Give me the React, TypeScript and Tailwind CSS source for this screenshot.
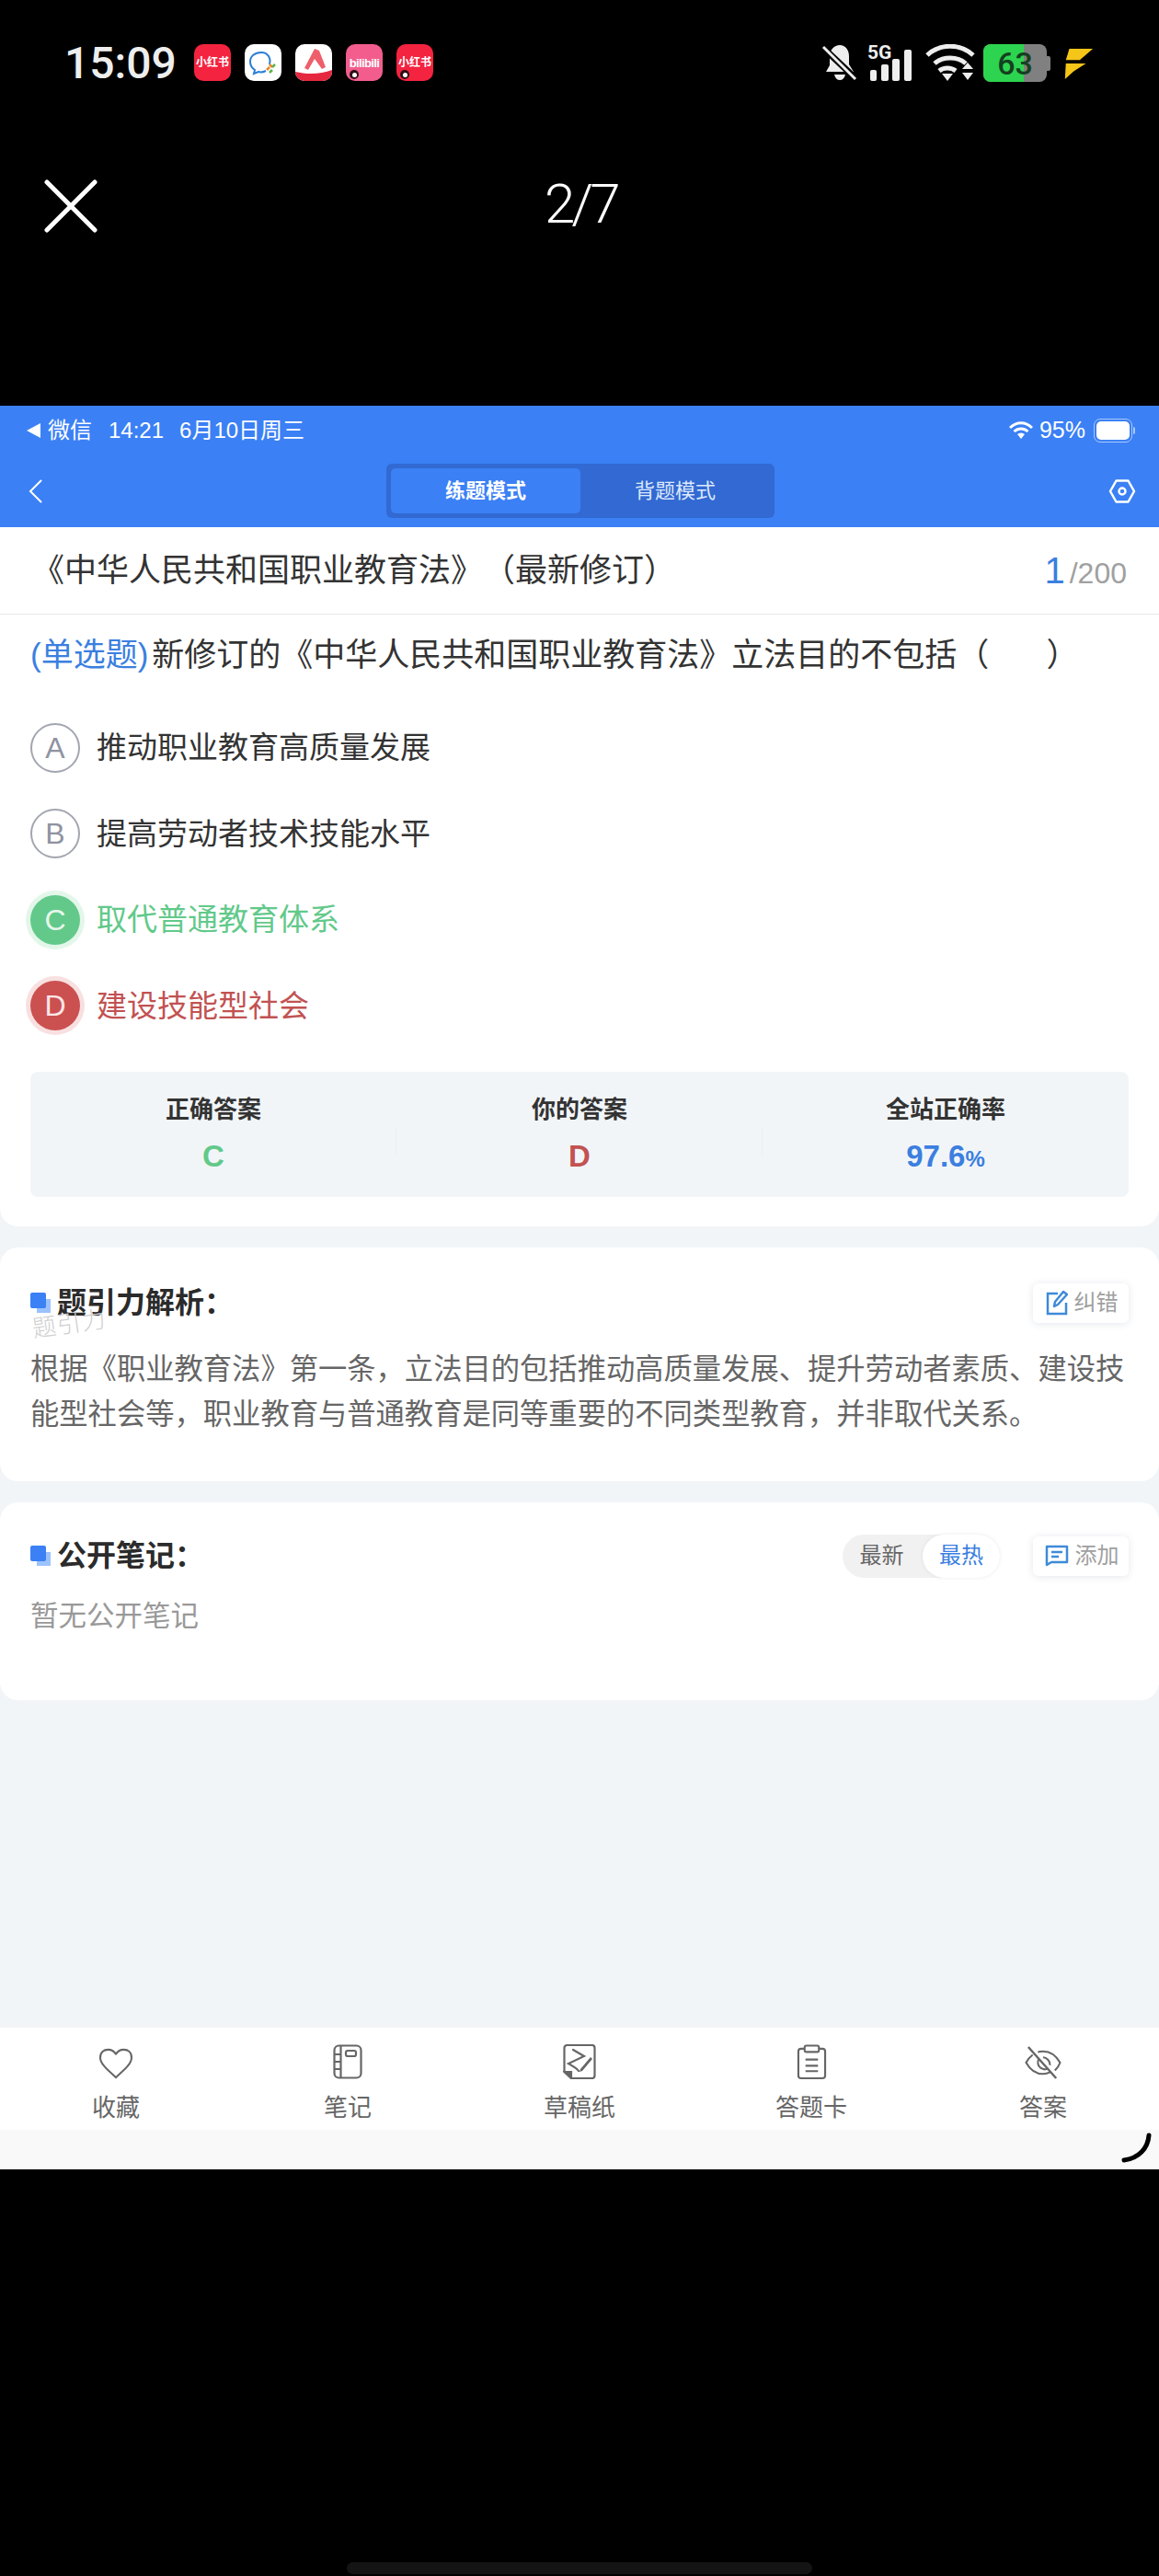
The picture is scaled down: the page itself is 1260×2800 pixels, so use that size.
import type { ReactNode } from 'react';

const BASE_FONT = "font-['Liberation_Sans','Noto_Sans_CJK_SC',sans-serif]";

/** Small app badge in the phone's notification row. */
function AppBadge({ className, children }: { className: string; children: ReactNode }) {
  return (
    <div className={`relative flex h-[40px] w-[40px] items-center justify-center overflow-hidden rounded-[10px] ${className}`}>
      {children}
    </div>
  );
}

function RecordDot() {
  return (
    <span className="absolute bottom-[2px] left-[4px] flex h-[10px] w-[10px] items-center justify-center rounded-full bg-[#2b1018]">
      <span className="h-[5px] w-[5px] rounded-full bg-white" />
    </span>
  );
}

function PhoneStatusBar() {
  return (
    <div className="flex h-[88px] items-start pl-[70px] pt-[48px]">
      <span className="mt-[-4px] w-[141px] font-['Roboto',sans-serif] text-[48px] leading-[50px] font-medium text-[#eeeeee]">15:09</span>
      <div className="flex gap-[15px]">
        <AppBadge className="bg-[#f4233f]">
          <span className="text-[12px] font-bold whitespace-nowrap text-white">小红书</span>
        </AppBadge>
        <AppBadge className="bg-white">
          <svg viewBox="0 0 40 40" className="h-[40px] w-[40px]" fill="none">
            <path d="M27 22c2-7-2-13-9-13S6 13 6 19c0 4 2 7 5 9l-1 4 5-2c3 1 6 0 8-1" stroke="#2b7fd6" strokeWidth="2" />
            <path d="M27 22l3 3M24 28l3-3" stroke="#e8862a" strokeWidth="2.5" />
            <path d="M30 25l3-3M27 31l3-3" stroke="#5ab34a" strokeWidth="2.5" />
          </svg>
        </AppBadge>
        <AppBadge className="bg-white">
          <svg viewBox="0 0 40 40" className="h-[40px] w-[40px]">
            <path d="M10 26L21 5l5 2 7 18-4 2-8-11-7 12z" fill="#ee5f6b" />
            <path d="M0 30c12 3 28 3 40-2v12H0z" fill="#e5283f" />
          </svg>
        </AppBadge>
        <AppBadge className="bg-[#f25d8e]">
          <span className="text-[13px] leading-none font-bold tracking-tighter text-white">bilibili</span>
          <RecordDot />
        </AppBadge>
        <AppBadge className="bg-[#f4233f]">
          <span className="text-[12px] font-bold whitespace-nowrap text-white">小红书</span>
          <RecordDot />
        </AppBadge>
      </div>
      <div className="ml-auto flex items-start pr-[70px]">
        <svg viewBox="0 0 40 40" className="h-[40px] w-[40px]">
          <path d="M20 1c6 0 10 5 10 12v9l5 8H5l4-7v-10C9 6 14 1 20 1zM14 33h12c-1 4-3 6-6 6s-5-2-6-6z" fill="#eeeeee" />
          <path d="M2 4l36 34" stroke="#000" strokeWidth="7" />
          <path d="M2 3l35 35" stroke="#eeeeee" strokeWidth="3" />
        </svg>
        <div className="relative ml-[10px] h-[40px] w-[51px]">
          <span className="absolute top-[0px] left-0 font-['Roboto',sans-serif] text-[21px] leading-[18px] font-bold text-[#eeeeee]">5G</span>
          <div className="absolute inset-x-[3px] bottom-0 flex items-end justify-between">
            <span className="h-[12px] w-[7px] rounded-[2px] bg-[#eeeeee]" />
            <span className="h-[18px] w-[8px] rounded-[2px] bg-[#eeeeee]" />
            <span className="h-[24px] w-[8px] rounded-[2px] bg-[#eeeeee]" />
            <span className="h-[34px] w-[8px] rounded-[2px] bg-[#eeeeee]" />
          </div>
        </div>
        <svg viewBox="0 0 54 41" className="ml-[12px] h-[41px] w-[54px]" fill="none">
          <path d="M2 12c14-13 36-13 50 0" stroke="#eeeeee" strokeWidth="5" />
          <path d="M10 21c9-8 25-8 34 0" stroke="#eeeeee" strokeWidth="5" />
          <path d="M18 30c5-4 13-4 18 0" stroke="#eeeeee" strokeWidth="5" transform="translate(-3 -1)" />
          <path d="M18 32h12l-6 8z" fill="#eeeeee" />
          <path d="M40 27l6-7 6 7zM40 31h12l-6 8z" fill="#eeeeee" />
        </svg>
        <div className="ml-[9px] flex items-center">
          <div className="relative flex h-[41px] w-[69px] items-center justify-center overflow-hidden rounded-[8px] bg-[#808080]">
            <div className="absolute inset-y-0 left-0 w-[44px] bg-[#2dd44f]" />
            <span className="relative font-['Roboto',sans-serif] text-[34px] leading-none font-medium text-[#14401f]">63</span>
          </div>
          <span className="h-[16px] w-[4px] rounded-r-[2px] bg-[#808080]" />
        </div>
        <svg viewBox="0 0 36 38" className="ml-[12px] mt-[3px] h-[36px] w-[36px]">
          <path d="M8 2h27L20 15H4z" fill="#f5c518" />
          <path d="M4 19h23L13 28 3 37z" fill="#f5c518" />
        </svg>
      </div>
    </div>
  );
}

function ViewerBar() {
  return (
    <div className="relative flex h-[353px] items-start pl-[48px] pt-[107px]">
      <svg viewBox="0 0 58 58" className="h-[58px] w-[58px]" fill="none">
        <path d="M3 3l52 52M55 3L3 55" stroke="#ffffff" strokeWidth="5" strokeLinecap="round" />
      </svg>
      <span className="absolute top-[99px] left-[592px] font-['Roboto',sans-serif] text-[60px] leading-[70px] font-light tracking-[-4px] text-white">2/7</span>
    </div>
  );
}

function AppHeader() {
  return (
    <div className="h-[132px] bg-[#3b80f5] text-white">
      <div className="flex h-[54px] items-center pl-[29px] pr-[26px] text-[24px]">
        <span className="h-0 w-0 border-y-[8px] border-r-[15px] border-y-transparent border-r-white" />
        <span className="ml-[8px]">微信</span>
        <span className="ml-[18px]">14:21</span>
        <span className="ml-[17px]">6月10日周三</span>
        <svg viewBox="0 0 26 20" className="ml-auto h-[20px] w-[26px]" fill="none">
          <path d="M1 7c7-7 17-7 24 0M5.500 11c4.500-4 10.500-4 15 0" stroke="#ffffff" strokeWidth="3" />
          <path d="M9 14c2.500-2 5.500-2 8 0l-4 5z" fill="#ffffff" />
        </svg>
        <span className="ml-[7px] text-[25px]">95%</span>
        <div className="ml-[9px] flex items-center">
          <div className="h-[26px] w-[42px] rounded-[7px] border border-[#a9c8fb] p-[2px]">
            <div className="h-full w-full rounded-[5px] bg-white" />
          </div>
          <span className="ml-[1px] h-[8px] w-[2px] rounded-r-full bg-[#a9c8fb]" />
        </div>
      </div>
      <div className="relative flex h-[78px] items-center justify-between pr-[25px] pl-[31px]">
        <svg viewBox="0 0 15 26" className="h-[26px] w-[15px]" fill="none">
          <path d="M13.500 1.500L2 13l11.500 11.500" stroke="#ffffff" strokeWidth="2" strokeLinecap="round" />
        </svg>
        <div className="absolute top-[9px] left-[420px] flex h-[59px] w-[422px] rounded-[6px] bg-[#3269d2] p-[5px] text-[22px]">
          <div className="flex w-[206px] items-center justify-center rounded-[5px] bg-[#3b80f5] font-semibold">练题模式</div>
          <div className="flex flex-1 items-center justify-center text-[#dce8fd]">背题模式</div>
        </div>
        <svg viewBox="0 0 30 30" className="h-[30px] w-[30px]" fill="none">
          <path d="M8.500 3.500h13L28 15l-6.500 11.500h-13L2 15z" stroke="#ffffff" strokeWidth="2.500" strokeLinejoin="round" />
          <circle cx="15" cy="15" r="3.500" stroke="#ffffff" strokeWidth="2.500" />
        </svg>
      </div>
    </div>
  );
}

const OPTIONS = [
  { key: 'A', text: '推动职业教育高质量发展', state: 'idle' },
  { key: 'B', text: '提高劳动者技术技能水平', state: 'idle' },
  { key: 'C', text: '取代普通教育体系', state: 'right' },
  { key: 'D', text: '建设技能型社会', state: 'wrong' },
] as const;

function OptionRow({ option }: { option: (typeof OPTIONS)[number] }) {
  const badge = {
    idle: 'border-2 border-[#a3a6b0] text-[#8f93a0] bg-white',
    right: 'bg-[#62c98a] text-[#e6f7ec] ring-[5px] ring-[#e3f6ea]',
    wrong: 'bg-[#cb5050] text-[#fbe6e6] ring-[5px] ring-[#f8e0e0]',
  }[option.state];
  const label = {
    idle: 'text-[#333333]',
    right: 'text-[#62c98a]',
    wrong: 'text-[#c25252]',
  }[option.state];

  return (
    <div className="flex h-[93.500px] items-center">
      <span className={`flex h-[54px] w-[54px] items-center justify-center rounded-full text-[32px] ${badge}`}>{option.key}</span>
      <span className={`ml-[18px] text-[33px] ${label}`}>{option.text}</span>
    </div>
  );
}

function QuestionCard() {
  return (
    <div className="rounded-b-[20px] bg-white">
      <div className="flex h-[95px] items-center justify-between border-b border-[#e8e8e8] pr-[35px] pl-[35px]">
        <span className="text-[35px] text-[#333333] [text-spacing-trim:space-all]">《中华人民共和国职业教育法》（最新修订）</span>
        <span className="flex items-baseline text-[#a0a0a0]">
          <span className="mr-[5px] text-[40px] text-[#3b7fe0]">1</span>
          <span className="text-[32px]">/200</span>
        </span>
      </div>
      <div className="px-[33px] pb-[32px]">
        <p className="flex h-[88px] items-center text-[35px] whitespace-nowrap text-[#333333] [text-spacing-trim:space-all]">
          <span className="mr-[4px] text-[#3b7fe0]">(单选题)</span>新修订的《中华人民共和国职业教育法》立法目的不包括（&emsp;&ensp;&nbsp;）
        </p>
        <div className="mt-[10px]">
          {OPTIONS.map((option) => (
            <OptionRow key={option.key} option={option} />
          ))}
        </div>
        <div className="mt-[25px] grid h-[136px] grid-cols-3 rounded-[8px] bg-[#f2f5f8]">
          <Stat label="正确答案" divider><span className="text-[#62c98a]">C</span></Stat>
          <Stat label="你的答案" divider><span className="text-[#c25252]">D</span></Stat>
          <Stat label="全站正确率">
            <span className="text-[#3b7fe0]">97.6<span className="text-[24px]">%</span></span>
          </Stat>
        </div>
      </div>
    </div>
  );
}

function Stat({ label, divider, children }: { label: string; divider?: boolean; children: ReactNode }) {
  return (
    <div className="relative flex flex-col items-center pt-[24px]">
      <span className="text-[26px] leading-[34px] font-semibold text-[#333333]">{label}</span>
      <span className="mt-[16px] text-[33px] leading-[36px] font-bold">{children}</span>
      {divider && <span className="absolute top-[60px] right-0 h-[30px] w-px bg-[#ebeef2]" />}
    </div>
  );
}

function SectionTitle({ children }: { children: ReactNode }) {
  return (
    <div className="flex items-center">
      <span className="relative mr-[7px] h-[22px] w-[22px]">
        <span className="absolute right-0 bottom-0 h-[15px] w-[15px] bg-[#9cc2fb]" />
        <span className="absolute top-0 left-0 h-[17px] w-[17px] rounded-[2px] bg-[#3b80f5]" />
      </span>
      <span className="text-[32px] font-bold text-[#2b2b2b]">{children}</span>
    </div>
  );
}

function ToolButton({ icon, label }: { icon: ReactNode; label: string }) {
  return (
    <div className="flex h-[43px] w-[104px] items-center justify-center gap-[7px] rounded-[6px] bg-white pl-[2px] text-[24px] text-[#a0a0a0] shadow-[0_1px_8px_rgba(30,60,110,0.12)]">
      {icon}
      {label}
    </div>
  );
}

function AnalysisCard() {
  return (
    <div className="relative mt-[23px] h-[254px] rounded-[20px] bg-white px-[33px] pt-[36px]">
      <div className="flex items-center justify-between">
        <SectionTitle>题引力解析：</SectionTitle>
        <ToolButton
          label="纠错"
          icon={
            <svg viewBox="0 0 24 28" className="h-[28px] w-[24px]" fill="none">
              <path d="M13 4H2v22h20V14" stroke="#3f8ad8" strokeWidth="2.500" />
              <path d="M9 18l1-5L19 2l4 3-10 11z" stroke="#3f8ad8" strokeWidth="2.500" strokeLinejoin="round" />
            </svg>
          }
        />
      </div>
      <span className="absolute top-[64px] left-[35px] -rotate-[8deg] text-[26px] font-light tracking-[1px] text-[#cfcfcf]">题引力</span>
      <p className="mt-[24px] w-[1196px] text-[31.300px] leading-[49px] text-[#666666]">
        根据《职业教育法》第一条，立法目的包括推动高质量发展、提升劳动者素质、建设技能型社会等，职业教育与普通教育是同等重要的不同类型教育，并非取代关系。
      </p>
    </div>
  );
}

function NotesCard() {
  return (
    <div className="mt-[23px] h-[215px] rounded-[20px] bg-white px-[33px] pt-[34px]">
      <div className="flex items-center">
        <SectionTitle>公开笔记：</SectionTitle>
        <div className="ml-auto flex h-[47px] w-[171px] items-center rounded-full bg-[#f1f1f1] text-[24px]">
          <span className="flex-1 pr-[2px] text-center text-[#666666]">最新</span>
          <span className="flex h-[47px] w-[84px] items-center justify-center rounded-full bg-white text-[#3b7fe0] shadow-[0_0_4px_rgba(0,0,0,0.08)]">最热</span>
        </div>
        <div className="ml-[36px]">
          <ToolButton
            label="添加"
            icon={
              <svg viewBox="0 0 26 24" className="h-[24px] w-[26px]" fill="none">
                <path d="M2 2h22v17H7l-5 3z" stroke="#3f8ad8" strokeWidth="2.500" strokeLinejoin="round" />
                <path d="M7 8h12M7 13h8" stroke="#3f8ad8" strokeWidth="2.500" />
              </svg>
            }
          />
        </div>
      </div>
      <p className="mt-[19px] text-[30.500px] leading-[44px] text-[#999999]">暂无公开笔记</p>
    </div>
  );
}

const ICON_STROKE = '#666666';

const TAB_ITEMS: { label: string; icon: ReactNode }[] = [
  {
    label: '收藏',
    icon: (
      <svg viewBox="0 0 40 36" className="mt-[4px] h-[34px] w-[40px]" fill="none">
        <path d="M20 34C9 24 2 18 2 11 2 5 6 2 11 2c4 0 7 2 9 5 2-3 5-5 9-5 5 0 9 3 9 9 0 7-7 13-18 23z" stroke={ICON_STROKE} strokeWidth="2.200" strokeLinejoin="round" />
      </svg>
    ),
  },
  {
    label: '笔记',
    icon: (
      <svg viewBox="0 0 32 38" className="h-[38px] w-[32px]" fill="none" stroke={ICON_STROKE} strokeWidth="2.200">
        <rect x="1.500" y="1.500" width="29" height="35" rx="5" />
        <path d="M8.500 1.500v35M1.500 11h7M1.500 19h7M1.500 27h7" />
        <rect x="14" y="7" width="11" height="6" rx="2" />
      </svg>
    ),
  },
  {
    label: '草稿纸',
    icon: (
      <svg viewBox="0 0 36 38" className="h-[38px] w-[36px]" fill="none" stroke={ICON_STROKE} strokeWidth="2.200">
        <path d="M1.500 30V4a3 3 0 0 1 3-3h27a3 3 0 0 1 3 3v30a3 3 0 0 1-3 3H9z" strokeLinejoin="round" />
        <path d="M1.500 30H9v7z" fill={ICON_STROKE} />
        <path d="M11 6l12 7-17 8c5 3 9 5 11 8" strokeLinecap="round" />
        <path d="M19 27l11-13 2 2-11 13-3 1z" fill={ICON_STROKE} stroke="none" />
      </svg>
    ),
  },
  {
    label: '答题卡',
    icon: (
      <svg viewBox="0 0 34 40" className="h-[39px] w-[33px]" fill="none" stroke={ICON_STROKE} strokeWidth="2.200">
        <path d="M9 5H5a3 3 0 0 0-3 3v27a3 3 0 0 0 3 3h24a3 3 0 0 0 3-3V8a3 3 0 0 0-3-3h-4" />
        <rect x="9" y="1.500" width="16" height="7" rx="2" />
        <path d="M10 17h14M10 24h14M10 30h14" />
      </svg>
    ),
  },
  {
    label: '答案',
    icon: (
      <svg viewBox="0 0 42 38" className="mt-[2px] h-[36px] w-[42px]" fill="none" stroke={ICON_STROKE} strokeWidth="2.200">
        <path d="M9 10C5 13 3 16 1.500 19 6 27 13 32 21 32c3 0 6-1 8-2M15 7c2-1 4-1 6-1 8 0 15 5 19.500 13-1 3-3 6-6 9" />
        <path d="M16 15c-2 3-1 8 2 10 3 2 6 2 8 1M21 13c4 0 8 4 8 9" />
        <path d="M4 1l32 36" strokeWidth="2.600" />
      </svg>
    ),
  },
];

function BottomTabs() {
  return (
    <div className="relative">
      <div className="grid h-[111px] grid-cols-5 bg-white">
        {TAB_ITEMS.map((item) => (
          <div key={item.label} className="flex flex-col items-center pt-[18px]">
            <div className="flex h-[40px] items-start justify-center">{item.icon}</div>
            <span className="mt-[11px] text-[26px] leading-[36px] text-[#666666]">{item.label}</span>
          </div>
        ))}
      </div>
      <div className="relative h-[43px] bg-[#f9f9f9]">
        <svg viewBox="0 0 36 34" className="absolute top-[3px] right-[6px] h-[34px] w-[36px]" fill="none">
          <path d="M31 3c-1 14-11 25-27 27" stroke="#000000" strokeWidth="5" strokeLinecap="round" />
        </svg>
      </div>
    </div>
  );
}

export default function App() {
  return (
    <div className={`flex h-[2800px] w-[1260px] flex-col bg-black ${BASE_FONT}`}>
      <PhoneStatusBar />
      <ViewerBar />
      <div className="flex h-[1917px] flex-col bg-[#f2f5f8]">
        <AppHeader />
        <QuestionCard />
        <AnalysisCard />
        <NotesCard />
        <div className="flex-1" />
        <BottomTabs />
      </div>
      <div className="flex flex-1 items-end justify-center pb-[2px]">
        <div className="h-[13px] w-[506px] rounded-full bg-[#141414]" />
      </div>
    </div>
  );
}
